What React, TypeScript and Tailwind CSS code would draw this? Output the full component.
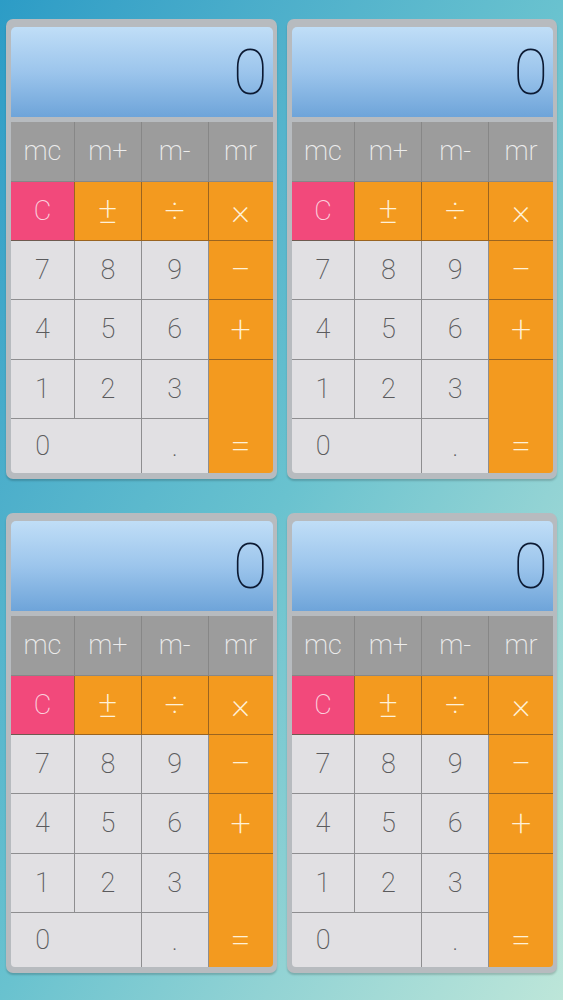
import React from "react";

const font = { fontFamily: 'Roboto, "Liberation Sans", sans-serif' };

function Calculator() {
  const mem = "bg-[#9c9c9c] border-[#878787] text-[#ededed]";
  const light = "bg-[#e1e0e3] border-[#8e8e90] text-[#5b5b5d]";
  const orange = "bg-[#f39a1f] border-[#9a6420] text-[#fff1d8]";
  const pink = "bg-[#f2497b] text-[#fbd0dc]";
  const op = "text-[36px]";

  return (
    <div className="bg-[#b7bbbf] rounded-[7px] pt-[8px] pl-[5px] pr-[4px] pb-[6px] shadow-[0_2px_2px_rgba(0,0,0,0.18)] h-[460px] flex flex-col">
      <div className="h-[90px] rounded-t-[5px] bg-gradient-to-b from-[#c0def7] via-[#9cc5ec] to-[#6ea4d9] flex items-end justify-end pr-[5px] pb-[13px]">
        <span className="text-[63px] leading-none font-thin text-[#0c1a33]" style={font}>
          0
        </span>
      </div>
      <div className="h-[5px]" />
      <div
        className="grid grid-cols-[64fr_67fr_67fr_64fr] grid-rows-[60px_59px_59px_60px_59px_54px] rounded-b-[4px] overflow-hidden text-[27px] font-extralight"
        style={font}
      >
        <div className={`${mem} border-r border-b flex items-center justify-center`}>mc</div>
        <div className={`${mem} border-r border-b flex items-center justify-center`}>m+</div>
        <div className={`${mem} border-r border-b flex items-center justify-center`}>m-</div>
        <div className={`${mem} border-b border-[#6f6f6f] flex items-center justify-center`}>mr</div>

        <div className={`${pink} border-r border-b border-r-[#9a6420] border-b-[#6e5a50] flex items-center justify-center`}>C</div>
        <div className={`${orange} ${op} border-r border-b flex items-center justify-center`}>±</div>
        <div className={`${orange} ${op} border-r border-b flex items-center justify-center`}>÷</div>
        <div className={`${orange} ${op} border-b flex items-center justify-center`}>×</div>

        <div className={`${light} border-r border-b flex items-center justify-center`}>7</div>
        <div className={`${light} border-r border-b flex items-center justify-center`}>8</div>
        <div className={`${light} border-r border-b flex items-center justify-center`}>9</div>
        <div className={`${orange} ${op} border-b flex items-center justify-center`}>−</div>

        <div className={`${light} border-r border-b flex items-center justify-center`}>4</div>
        <div className={`${light} border-r border-b flex items-center justify-center`}>5</div>
        <div className={`${light} border-r border-b flex items-center justify-center`}>6</div>
        <div className={`${orange} ${op} border-b flex items-center justify-center`}>+</div>

        <div className={`${light} border-r border-b flex items-center justify-center`}>1</div>
        <div className={`${light} border-r border-b flex items-center justify-center`}>2</div>
        <div className={`${light} border-r border-b flex items-center justify-center`}>3</div>
        <div className={`${orange} ${op} row-span-2 flex flex-col justify-end`}>
          <div className="h-[54px] flex items-center justify-center">=</div>
        </div>

        <div className={`${light} col-span-2 border-r grid grid-cols-[64fr_67fr]`}>
          <div className="flex items-center justify-center">0</div>
          <div />
        </div>
        <div className={`${light} border-r flex items-end justify-center pb-[12px]`}>
          <span className="leading-none">.</span>
        </div>
      </div>
    </div>
  );
}

export default function App() {
  return (
    <div className="w-[563px] h-[1000px] bg-gradient-to-br from-[#2c9cc6] via-[#69c2cf] to-[#bde6d9] pt-[19px] px-[6px] overflow-hidden">
      <div className="grid grid-cols-2 gap-x-[10px] gap-y-[34px]">
        <Calculator />
        <Calculator />
        <Calculator />
        <Calculator />
      </div>
    </div>
  );
}
